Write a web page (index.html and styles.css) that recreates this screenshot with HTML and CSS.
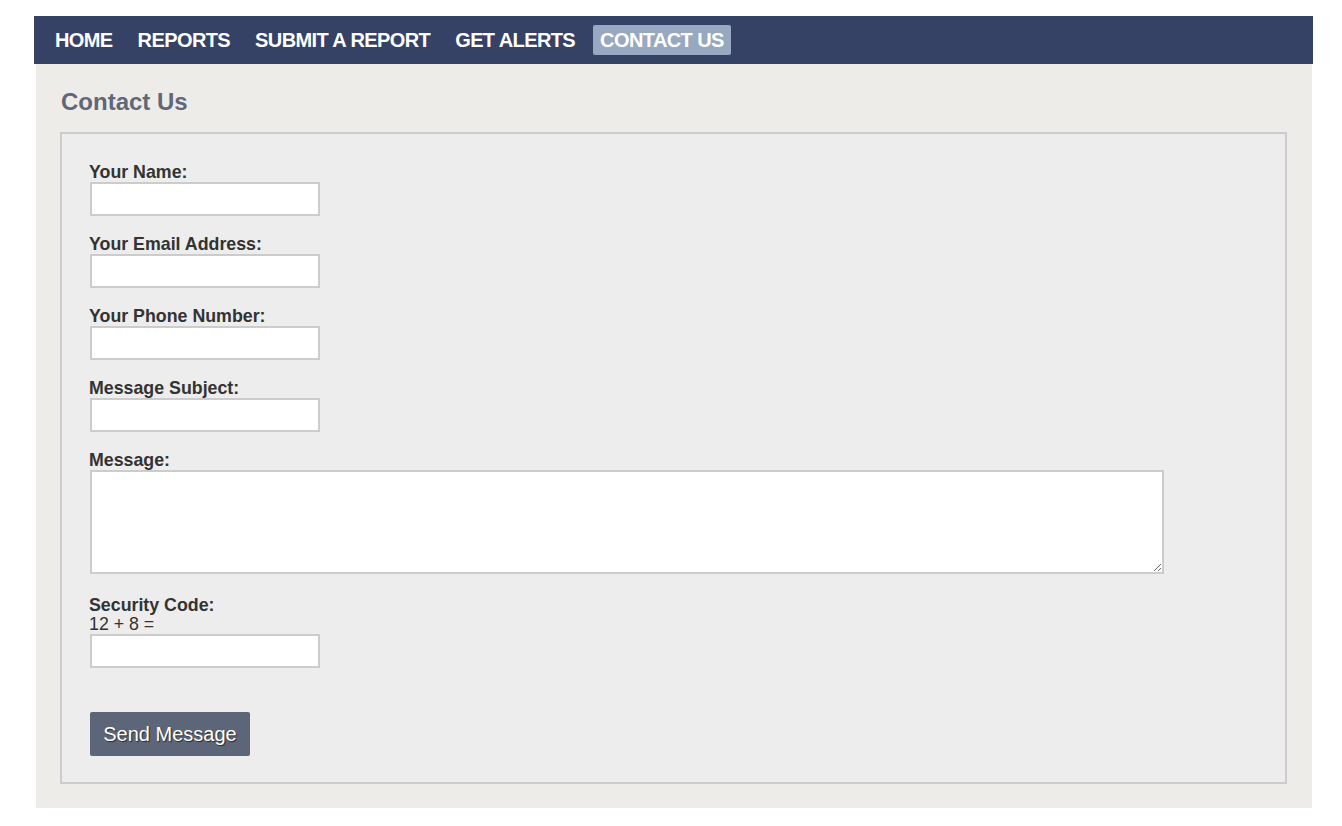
FILE: index.html
```html
<!DOCTYPE html>
<html lang="en">
<head>
<meta charset="utf-8">
<title>Contact Us</title>
<link rel="stylesheet" href="styles.css">
</head>
<body>
<div class="page">
  <nav class="nav">
    <a class="nav-item" href="#">Home</a>
    <a class="nav-item" href="#">Reports</a>
    <a class="nav-item" href="#">Submit a Report</a>
    <a class="nav-item" href="#">Get Alerts</a>
    <a class="nav-item active" href="#">Contact Us</a>
  </nav>
  <main class="content">
    <h2 class="title">Contact Us</h2>
    <form class="box">
      <div class="field">
        <label class="label">Your Name:</label>
        <input class="input" type="text">
      </div>
      <div class="field">
        <label class="label">Your Email Address:</label>
        <input class="input" type="text">
      </div>
      <div class="field">
        <label class="label">Your Phone Number:</label>
        <input class="input" type="text">
      </div>
      <div class="field">
        <label class="label">Message Subject:</label>
        <input class="input" type="text">
      </div>
      <div class="field field-msg">
        <label class="label">Message:</label>
        <textarea class="textarea"></textarea>
      </div>
      <div class="field field-code">
        <label class="label">Security Code:</label>
        <div class="code">12 + 8 =</div>
        <input class="input" type="text">
      </div>
      <button class="send" type="button">Send Message</button>
    </form>
  </main>
</div>
</body>
</html>
```

FILE: styles.css
```css
html, body {
  margin: 0;
  padding: 0;
  background: #ffffff;
}

body {
  font-family: "Liberation Sans", Arial, Helvetica, sans-serif;
  color: #333333;
}

.page {
  margin: 16px 0 0 34px;
  width: 1279px;
}

.nav {
  display: flex;
  align-items: center;
  gap: 11px;
  height: 48px;
  box-sizing: border-box;
  padding: 9px 14px;
  background: #354266;
}

.nav-item {
  display: block;
  height: 30px;
  line-height: 30px;
  padding: 0 7px;
  color: #ffffff;
  text-decoration: none;
  text-transform: uppercase;
  font-weight: bold;
  font-size: 20px;
  letter-spacing: -0.6px;
  border-radius: 2px;
}

.nav-item.active {
  background: #97a8c0;
}

.content {
  margin: 0 1px 0 2px;
  background: #eeece9;
  padding: 24px 25px 24px 24px;
}

.title {
  margin: 0 0 16px 1px;
  font-size: 24px;
  line-height: 28px;
  font-weight: bold;
  color: #5f6878;
}

.box {
  display: block;
  margin: 0;
  background: #ededed;
  border: 2px solid #cccccc;
  padding: 29px 28px 26px 28px;
}

.field {
  margin-bottom: 19px;
}

.field-msg {
  margin-bottom: 22px;
}

.field-code {
  margin-bottom: 44px;
}

.label {
  display: block;
  font-size: 17.8px;
  line-height: 19px;
  font-weight: bold;
  color: #333333;
  margin-left: -1px;
}

.code {
  font-size: 17.8px;
  line-height: 19px;
  color: #333333;
  margin-left: -1px;
}

.input {
  display: block;
  width: 230px;
  height: 34px;
  box-sizing: border-box;
  border: 2px solid #cccccc;
  background: #ffffff;
  padding: 4px 6px;
  font-family: inherit;
  font-size: 16px;
  outline: none;
}

.textarea {
  display: block;
  width: 1074px;
  height: 104px;
  box-sizing: border-box;
  border: 2px solid #cccccc;
  background: #ffffff;
  padding: 4px 6px;
  font-family: inherit;
  font-size: 16px;
  outline: none;
  resize: both;
}

.send {
  display: block;
  height: 44px;
  padding: 0 12px;
  width: 160px;
  border: none;
  border-radius: 2px;
  background: #5c6678;
  color: #ffffff;
  font-family: inherit;
  font-size: 20px;
  line-height: 44px;
  text-shadow: 1px 1px 1px rgba(0, 0, 0, 0.6);
  cursor: pointer;
}
```
